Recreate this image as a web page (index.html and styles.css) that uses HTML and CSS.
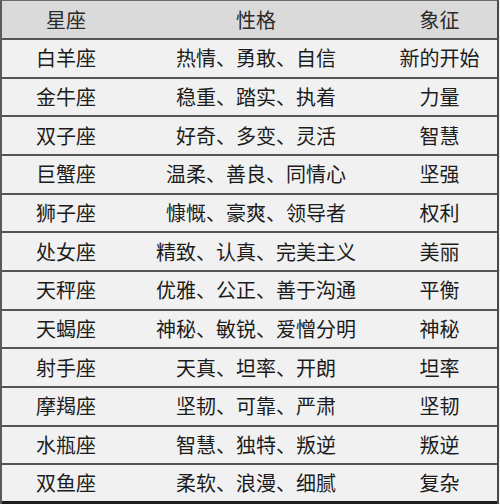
FILE: index.html
```html
<!DOCTYPE html>
<html lang="zh">
<head>
<meta charset="utf-8">
<link rel="stylesheet" href="styles.css">
</head>
<body>
<div class="table">
  <div class="row head"><div class="c1">星座</div><div class="c2">性格</div><div class="c3">象征</div></div>
  <div class="row"><div class="c1">白羊座</div><div class="c2">热情、勇敢、自信</div><div class="c3">新的开始</div></div>
  <div class="row"><div class="c1">金牛座</div><div class="c2">稳重、踏实、执着</div><div class="c3">力量</div></div>
  <div class="row"><div class="c1">双子座</div><div class="c2">好奇、多变、灵活</div><div class="c3">智慧</div></div>
  <div class="row"><div class="c1">巨蟹座</div><div class="c2">温柔、善良、同情心</div><div class="c3">坚强</div></div>
  <div class="row"><div class="c1">狮子座</div><div class="c2">慷慨、豪爽、领导者</div><div class="c3">权利</div></div>
  <div class="row"><div class="c1">处女座</div><div class="c2">精致、认真、完美主义</div><div class="c3">美丽</div></div>
  <div class="row"><div class="c1">天秤座</div><div class="c2">优雅、公正、善于沟通</div><div class="c3">平衡</div></div>
  <div class="row"><div class="c1">天蝎座</div><div class="c2">神秘、敏锐、爱憎分明</div><div class="c3">神秘</div></div>
  <div class="row"><div class="c1">射手座</div><div class="c2">天真、坦率、开朗</div><div class="c3">坦率</div></div>
  <div class="row"><div class="c1">摩羯座</div><div class="c2">坚韧、可靠、严肃</div><div class="c3">坚韧</div></div>
  <div class="row"><div class="c1">水瓶座</div><div class="c2">智慧、独特、叛逆</div><div class="c3">叛逆</div></div>
  <div class="row last"><div class="c1">双鱼座</div><div class="c2">柔软、浪漫、细腻</div><div class="c3">复杂</div></div>
</div>
</body>
</html>
```
FILE: styles.css
```css
html, body {
  margin: 0;
  padding: 0;
  background: #f4f4f4;
}
.table {
  width: 499px;
  height: 504px;
  box-sizing: border-box;
  border-top: 1px solid #6a6a6a;
  border-left: 2px solid #5a5a5a;
  border-right: 2px solid #4a4a4a;
  display: grid;
  grid-template-rows: 39px repeat(12, 1fr);
  background: #f1f1f1;
  font-family: "Noto Sans CJK SC", "Noto Sans", sans-serif;
  font-size: 20px;
  color: #1c1c1c;
}
.row {
  display: grid;
  grid-template-columns: 128px 252px 1fr;
  align-items: center;
  text-align: center;
  border-bottom: 2px solid #555;
  line-height: 1;
}
.row.head {
  background: #dadada;
  color: #2a2a2a;
}
.row.last {
  border-bottom: 3px solid #1e1e1e;
}
.c1, .c2, .c3 {
  white-space: nowrap;
}
```
